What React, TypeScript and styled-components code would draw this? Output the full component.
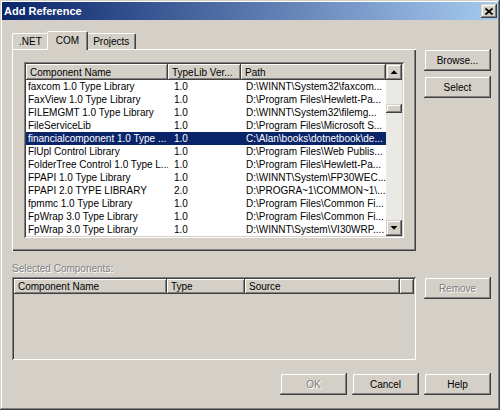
import styled, { createGlobalStyle, css } from "styled-components";

const face = "#d4d0c8";
const shadow = "#808080";
const dark = "#404040";

const GlobalStyle = createGlobalStyle`
  html, body {
    margin: 0;
    padding: 0;
    background: ${face};
  }
  body {
    font-family: "Liberation Sans", Arial, sans-serif;
    font-size: 10px;
    color: #000;
  }
`;

const raised = css`
  box-shadow: inset -1px -1px ${dark}, inset 1px 1px ${face},
    inset -2px -2px ${shadow}, inset 2px 2px #fff;
`;

const sunken = css`
  box-shadow: inset 1px 1px ${shadow}, inset -1px -1px #fff,
    inset 2px 2px ${dark}, inset -2px -2px ${face};
`;

const Window = styled.div`
  width: 500px;
  height: 410px;
  box-sizing: border-box;
  padding: 2px;
  background: ${face};
  box-shadow: inset -1px -1px ${dark}, inset 1px 1px ${face},
    inset -2px -2px ${shadow}, inset 2px 2px #fff;
  display: flex;
  flex-direction: column;
`;

const TitleBar = styled.div`
  height: 18px;
  flex-shrink: 0;
  display: flex;
  align-items: center;
  justify-content: space-between;
  padding: 0 1px 0 2px;
  background: linear-gradient(to right, #0a246a, #a6caf0);
  color: #fff;
  font-size: 11px;
  font-weight: bold;
`;

const CloseButton = styled.div`
  width: 16px;
  height: 14px;
  display: flex;
  align-items: center;
  justify-content: center;
  background: ${face};
  ${raised}
`;

const Content = styled.div`
  display: flex;
  flex-direction: column;
  padding: 11px 7px 0 10px;
`;

const TopRow = styled.div`
  display: flex;
  gap: 8px;
`;

const LeftTop = styled.div`
  width: 404px;
  display: flex;
  flex-direction: column;
`;

const TabStrip = styled.div`
  display: flex;
  align-items: flex-end;
  height: 18px;
`;

const Tab = styled.div<{ $active?: boolean }>`
  box-sizing: border-box;
  display: flex;
  align-items: center;
  background: ${face};
  border-top: 1px solid #fff;
  border-left: 1px solid #fff;
  border-right: 1px solid ${dark};
  border-radius: 2px 2px 0 0;
  box-shadow: inset -1px 0 ${shadow};
  height: 16px;
  padding: 0 6px;
  ${({ $active }) =>
    $active &&
    css`
      position: relative;
      z-index: 1;
      height: 19px;
      margin: 0 -2px -1px;
      padding: 0 8px 2px;
    `}
`;

const Panel = styled.div`
  height: 202px;
  box-sizing: border-box;
  padding: 13px 12px;
  box-shadow: inset 1px 1px #fff, inset -1px -1px ${dark},
    inset -2px -2px ${shadow};
`;

const ListView = styled.div<{ $disabled?: boolean }>`
  box-sizing: border-box;
  padding: 2px;
  display: flex;
  background: ${({ $disabled }) => ($disabled ? face : "#fff")};
  ${sunken}
`;

const ComponentList = styled(ListView)`
  height: 176px;
`;

const SelectedList = styled(ListView)`
  width: 404px;
  height: 83px;
`;

const ListBody = styled.div`
  flex: 1;
  min-width: 0;
  display: flex;
  flex-direction: column;
`;

const HeaderRow = styled.div<{ $h: number }>`
  display: flex;
  flex-shrink: 0;
  height: ${({ $h }) => $h}px;
`;

const HeaderCell = styled.div<{ $w?: number }>`
  box-sizing: border-box;
  ${({ $w }) => ($w ? `width: ${$w}px;` : "flex: 1;")}
  flex-shrink: 0;
  padding-left: 4px;
  display: flex;
  align-items: center;
  white-space: nowrap;
  overflow: hidden;
  background: ${face};
  box-shadow: inset -1px -1px ${dark}, inset 1px 1px #fff,
    inset -2px -2px ${shadow};
`;

const Row = styled.div<{ $selected?: boolean }>`
  display: flex;
  height: 13px;
  line-height: 13px;
  background: ${({ $selected }) => ($selected ? "#0a246a" : "transparent")};
  color: ${({ $selected }) => ($selected ? "#fff" : "#000")};
`;

const Cell = styled.div<{ $w: number; $pad: number }>`
  box-sizing: border-box;
  width: ${({ $w }) => $w}px;
  flex-shrink: 0;
  padding-left: ${({ $pad }) => $pad}px;
  white-space: nowrap;
  overflow: hidden;
`;

const Scrollbar = styled.div`
  width: 16px;
  flex-shrink: 0;
  display: flex;
  flex-direction: column;
`;

const ScrollButton = styled.div`
  width: 16px;
  height: 16px;
  flex-shrink: 0;
  display: flex;
  align-items: center;
  justify-content: center;
  background: ${face};
  ${raised}
`;

const Track = styled.div`
  flex: 1;
  display: flex;
  flex-direction: column;
  background: #ebe9e4;
`;

const Thumb = styled.div`
  margin-top: 24px;
  height: 9px;
  background: ${face};
  ${raised}
`;

const ButtonColumn = styled.div`
  display: flex;
  flex-direction: column;
  gap: 5px;
  padding-top: 18px;
`;

const Button = styled.button`
  width: 67px;
  height: 22px;
  padding: 0;
  border: none;
  background: ${face};
  font-family: inherit;
  font-size: 10px;
  color: #000;
  ${raised}

  &:disabled {
    color: ${shadow};
    text-shadow: 1px 1px #fff;
  }
`;

const GroupLabel = styled.div`
  margin-top: 11px;
  height: 13px;
  line-height: 13px;
  color: ${shadow};
  text-shadow: 1px 1px #fff;
`;

const MiddleRow = styled.div`
  display: flex;
  align-items: flex-start;
  gap: 8px;
  margin-top: 2px;
`;

const BottomRow = styled.div`
  display: flex;
  justify-content: flex-end;
  gap: 5px;
  margin-top: 13px;
`;

const columns = [
  { title: "Component Name", w: 142, pad: 2 },
  { title: "TypeLib Ver...", w: 73, pad: 6 },
  { title: "Path", w: 145, pad: 5 },
];

const components = [
  ["faxcom 1.0 Type Library", "1.0", "D:\\WINNT\\System32\\faxcom..."],
  ["FaxView 1.0 Type Library", "1.0", "D:\\Program Files\\Hewlett-Pa..."],
  ["FILEMGMT 1.0 Type Library", "1.0", "D:\\WINNT\\System32\\filemg..."],
  ["FileServiceLib", "1.0", "D:\\Program Files\\Microsoft S..."],
  ["financialcomponent 1.0 Type ...", "1.0", "C:\\Alan\\books\\dotnetbook\\de..."],
  ["FlUpl Control Library", "1.0", "D:\\Program Files\\Web Publis..."],
  ["FolderTree Control 1.0 Type L...", "1.0", "D:\\Program Files\\Hewlett-Pa..."],
  ["FPAPI 1.0 Type Library", "1.0", "D:\\WINNT\\System\\FP30WEC..."],
  ["FPAPI 2.0 TYPE LIBRARY", "2.0", "D:\\PROGRA~1\\COMMON~1\\..."],
  ["fpmmc 1.0 Type Library", "1.0", "D:\\Program Files\\Common Fi..."],
  ["FpWrap 3.0 Type Library", "1.0", "D:\\Program Files\\Common Fi..."],
  ["FpWrap 3.0 Type Library", "1.0", "D:\\WINNT\\System\\VI30WRP...."],
];

const selectedIndex = 4;

const Arrow = ({ down }: { down?: boolean }) => (
  <svg width="8" height="4" viewBox="0 0 8 4">
    <polygon
      points={down ? "0.5,0 7.5,0 4,3.8" : "0.5,4 7.5,4 4,0.2"}
      fill="#000"
    />
  </svg>
);

export default function App() {
  return (
    <>
      <GlobalStyle />
      <Window>
        <TitleBar>
          <span>Add Reference</span>
          <CloseButton>
            <svg width="8" height="7" viewBox="0 0 8 7">
              <path d="M0.5 0.5L7.5 6.5M7.5 0.5L0.5 6.5" stroke="#000" strokeWidth="1.8" />
            </svg>
          </CloseButton>
        </TitleBar>

        <Content>
          <TopRow>
            <LeftTop>
              <TabStrip>
                <Tab>.NET</Tab>
                <Tab $active>COM</Tab>
                <Tab>Projects</Tab>
              </TabStrip>
              <Panel>
                <ComponentList>
                  <ListBody>
                    <HeaderRow $h={16}>
                      {columns.map((c) => (
                        <HeaderCell key={c.title} $w={c.w}>
                          {c.title}
                        </HeaderCell>
                      ))}
                    </HeaderRow>
                    {components.map((row, i) => (
                      <Row key={i} $selected={i === selectedIndex}>
                        {row.map((text, j) => (
                          <Cell key={j} $w={columns[j].w} $pad={columns[j].pad}>
                            {text}
                          </Cell>
                        ))}
                      </Row>
                    ))}
                  </ListBody>
                  <Scrollbar>
                    <ScrollButton>
                      <Arrow />
                    </ScrollButton>
                    <Track>
                      <Thumb />
                    </Track>
                    <ScrollButton>
                      <Arrow down />
                    </ScrollButton>
                  </Scrollbar>
                </ComponentList>
              </Panel>
            </LeftTop>
            <ButtonColumn>
              <Button>Browse...</Button>
              <Button>Select</Button>
            </ButtonColumn>
          </TopRow>

          <GroupLabel>Selected Components:</GroupLabel>
          <MiddleRow>
            <SelectedList $disabled>
              <ListBody>
                <HeaderRow $h={15}>
                  <HeaderCell $w={153}>Component Name</HeaderCell>
                  <HeaderCell $w={78}>Type</HeaderCell>
                  <HeaderCell $w={155}>Source</HeaderCell>
                  <HeaderCell />
                </HeaderRow>
              </ListBody>
            </SelectedList>
            <Button disabled>Remove</Button>
          </MiddleRow>

          <BottomRow>
            <Button disabled>OK</Button>
            <Button>Cancel</Button>
            <Button>Help</Button>
          </BottomRow>
        </Content>
      </Window>
    </>
  );
}
